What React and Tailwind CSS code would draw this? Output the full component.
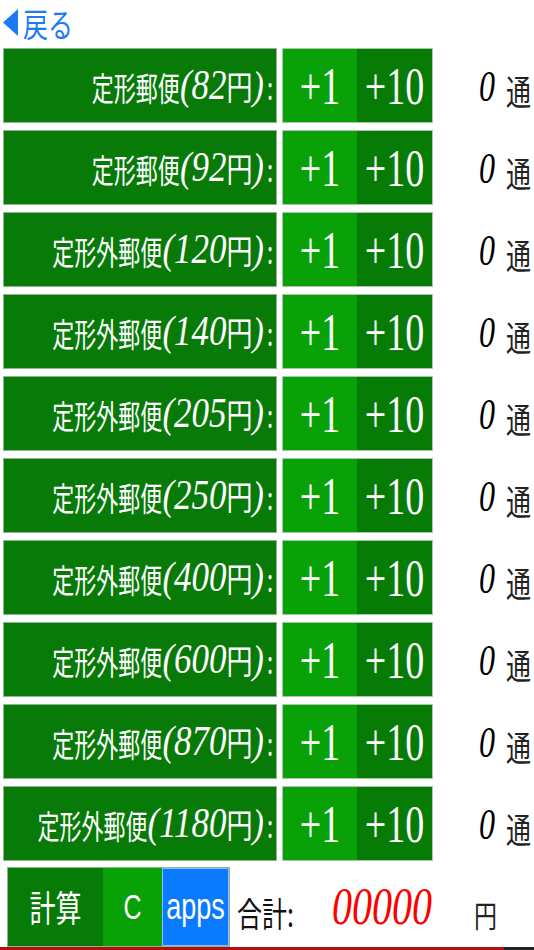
import React from 'react'

const rows = [
    { name: '定形郵便', price: '82' },
    { name: '定形郵便', price: '92' },
    { name: '定形外郵便', price: '120' },
    { name: '定形外郵便', price: '140' },
    { name: '定形外郵便', price: '205' },
    { name: '定形外郵便', price: '250' },
    { name: '定形外郵便', price: '400' },
    { name: '定形外郵便', price: '600' },
    { name: '定形外郵便', price: '870' },
    { name: '定形外郵便', price: '1180' },
]

function PostRow({ name, price }) {
    return (
        <div className="flex h-[75px] items-stretch">
            <div className="ml-[3px] w-[274px] bg-[#077a07] border border-[#8fb58f] flex items-center justify-end pr-[3px] text-white whitespace-nowrap leading-none">
                <span className="inline-block scale-y-[1.5] text-[22px] font-['Noto_Sans_CJK_JP',sans-serif]">{name}</span>
                <span className="inline-block scale-y-[1.2] text-[35px] italic font-['Liberation_Serif',serif]">({price}</span>
                <span className="inline-block scale-y-[1.3] text-[26px] font-['Noto_Sans_CJK_JP',sans-serif]">円</span>
                <span className="inline-block scale-y-[1.2] text-[34px] italic font-['Liberation_Serif',serif]">)</span>
                <span className="inline-block ml-[3px] scale-y-[1.4] text-[22px] font-['Noto_Sans_CJK_JP',sans-serif]">:</span>
            </div>
            <div className="ml-[5px] flex border border-[#a9c9a9]">
                <button className="w-[74px] bg-[#08a108] flex items-center justify-center text-white">
                    <span className="inline-block scale-y-[1.4] leading-none text-[38px] font-['Liberation_Serif',serif]">+1</span>
                </button>
                <button className="w-[75px] bg-[#067b06] flex items-center justify-center text-white">
                    <span className="inline-block scale-y-[1.4] leading-none text-[38px] font-['Liberation_Serif',serif]">+10</span>
                </button>
            </div>
            <div className="flex-1 flex items-center pl-[46px] whitespace-nowrap">
                <span className="inline-block scale-y-[1.4] leading-none text-[32px] italic text-black font-['Liberation_Serif',serif]">0</span>
                <span className="inline-block scale-y-[1.4] leading-none text-[25px] ml-[11px] mt-[10px] text-[#222] font-['Noto_Sans_CJK_JP',sans-serif]">通</span>
            </div>
        </div>
    )
}

export default function App() {
    return (
        <div className="relative w-[534px] h-[950px] overflow-hidden bg-white">
            <div className="h-[48px] flex items-start pt-[8px] pl-[3px]">
                <button className="flex items-center text-[#1c7bf3]">
                    <svg width="15" height="27" viewBox="0 0 15 27">
                        <polygon points="15,0 15,27 0,13.5" fill="#1c7bf3" />
                    </svg>
                    <span className="inline-block ml-[5px] mt-[3px] scale-y-[1.3] leading-none text-[25px] font-['Noto_Sans_CJK_JP',sans-serif]">戻る</span>
                </button>
            </div>

            <div className="flex flex-col gap-[7px]">
                {rows.map((r, i) => (
                    <PostRow key={i} name={r.name} price={r.price} />
                ))}
            </div>

            <div className="mt-[6px] flex h-[80px] items-stretch">
                <div className="ml-[7px] flex border border-[#8fb58f]">
                    <button className="w-[95px] bg-[#077a07] flex items-center justify-center text-white">
                        <span className="inline-block scale-y-[1.4] leading-none text-[26px] font-['Noto_Sans_CJK_JP',sans-serif]">計算</span>
                    </button>
                    <button className="w-[59px] bg-[#08a108] flex items-center justify-center text-white">
                        <span className="inline-block scale-y-[1.4] leading-none text-[25px] font-['Liberation_Sans',sans-serif]">C</span>
                    </button>
                    <button className="w-[67px] bg-[#0a7bff] border border-[#8bbcff] flex items-center justify-center text-white">
                        <span className="inline-block scale-y-[1.35] leading-none text-[27px] font-['Liberation_Sans',sans-serif]">apps</span>
                    </button>
                </div>
                <div className="flex items-center whitespace-nowrap">
                    <span className="inline-block ml-[7px] mt-[10px] scale-y-[1.35] leading-none text-[25px] text-[#111] font-['Noto_Sans_CJK_JP',sans-serif]">合計:</span>
                    <span className="inline-block ml-[38px] scale-y-[1.3] leading-none text-[40px] italic text-[#ff0000] font-['Liberation_Serif',serif]">00000</span>
                    <span className="inline-block ml-[42px] mt-[14px] scale-y-[1.3] leading-none text-[23px] text-[#222] font-['Noto_Sans_CJK_JP',sans-serif]">円</span>
                </div>
            </div>

            <div className="absolute bottom-0 left-0 right-0 flex h-[3px]">
                <div className="flex-1 bg-[#b30f0f]" />
                <div className="w-[30px] bg-[#222]" />
            </div>
        </div>
    )
}
